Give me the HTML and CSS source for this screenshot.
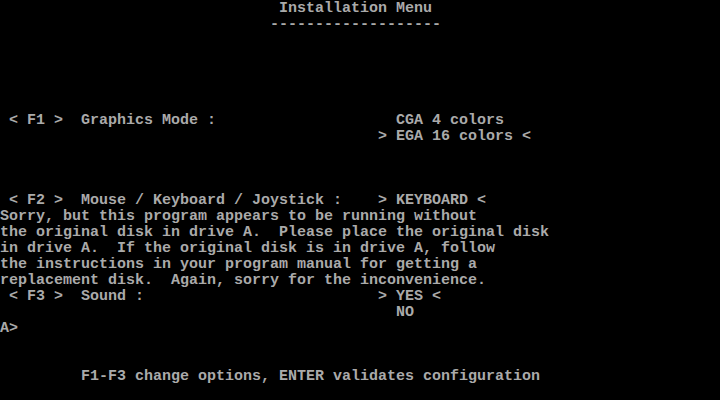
FILE: index.html
```html
<!DOCTYPE html>
<html lang="en">

<head>
    <meta charset="UTF-8">
    <meta name="viewport" content="width=device-width, initial-scale=1.0">
    <title>Installation Menu</title>
    <link rel="stylesheet" href="styles.css">
</head>

<body>
    <div class="screen">
        <div class="row">                               Installation Menu</div>
        <div class="row">                              -------------------</div>
        <div class="row"> </div>
        <div class="row"> </div>
        <div class="row"> </div>
        <div class="row"> </div>
        <div class="row"> </div>
        <div class="row"> &lt; F1 &gt;  Graphics Mode :                    CGA 4 colors</div>
        <div class="row">                                          &gt; EGA 16 colors &lt;</div>
        <div class="row"> </div>
        <div class="row"> </div>
        <div class="row"> </div>
        <div class="row"> &lt; F2 &gt;  Mouse / Keyboard / Joystick :    &gt; KEYBOARD &lt;</div>
        <div class="row">Sorry, but this program appears to be running without</div>
        <div class="row">the original disk in drive A.  Please place the original disk</div>
        <div class="row">in drive A.  If the original disk is in drive A, follow</div>
        <div class="row">the instructions in your program manual for getting a</div>
        <div class="row">replacement disk.  Again, sorry for the inconvenience.</div>
        <div class="row"> &lt; F3 &gt;  Sound :                          &gt; YES &lt;</div>
        <div class="row">                                            NO</div>
        <div class="row">A&gt;</div>
        <div class="row"> </div>
        <div class="row"> </div>
        <div class="row">         F1-F3 change options, ENTER validates configuration</div>
        <div class="row"> </div>
    </div>
</body>

</html>
```

FILE: styles.css
```css
html,
body {
    margin: 0;
    background: #000;
}

.screen {
    box-sizing: border-box;
    width: 720px;
    height: 400px;
    padding-top: 1px;
    overflow: hidden;
    background: #000;
    color: #aaaaaa;
    font-family: "Liberation Mono", "DejaVu Sans Mono", monospace;
    font-size: 15px;
    font-weight: bold;
}

.row {
    height: 16px;
    line-height: 16px;
    white-space: pre;
}
```
